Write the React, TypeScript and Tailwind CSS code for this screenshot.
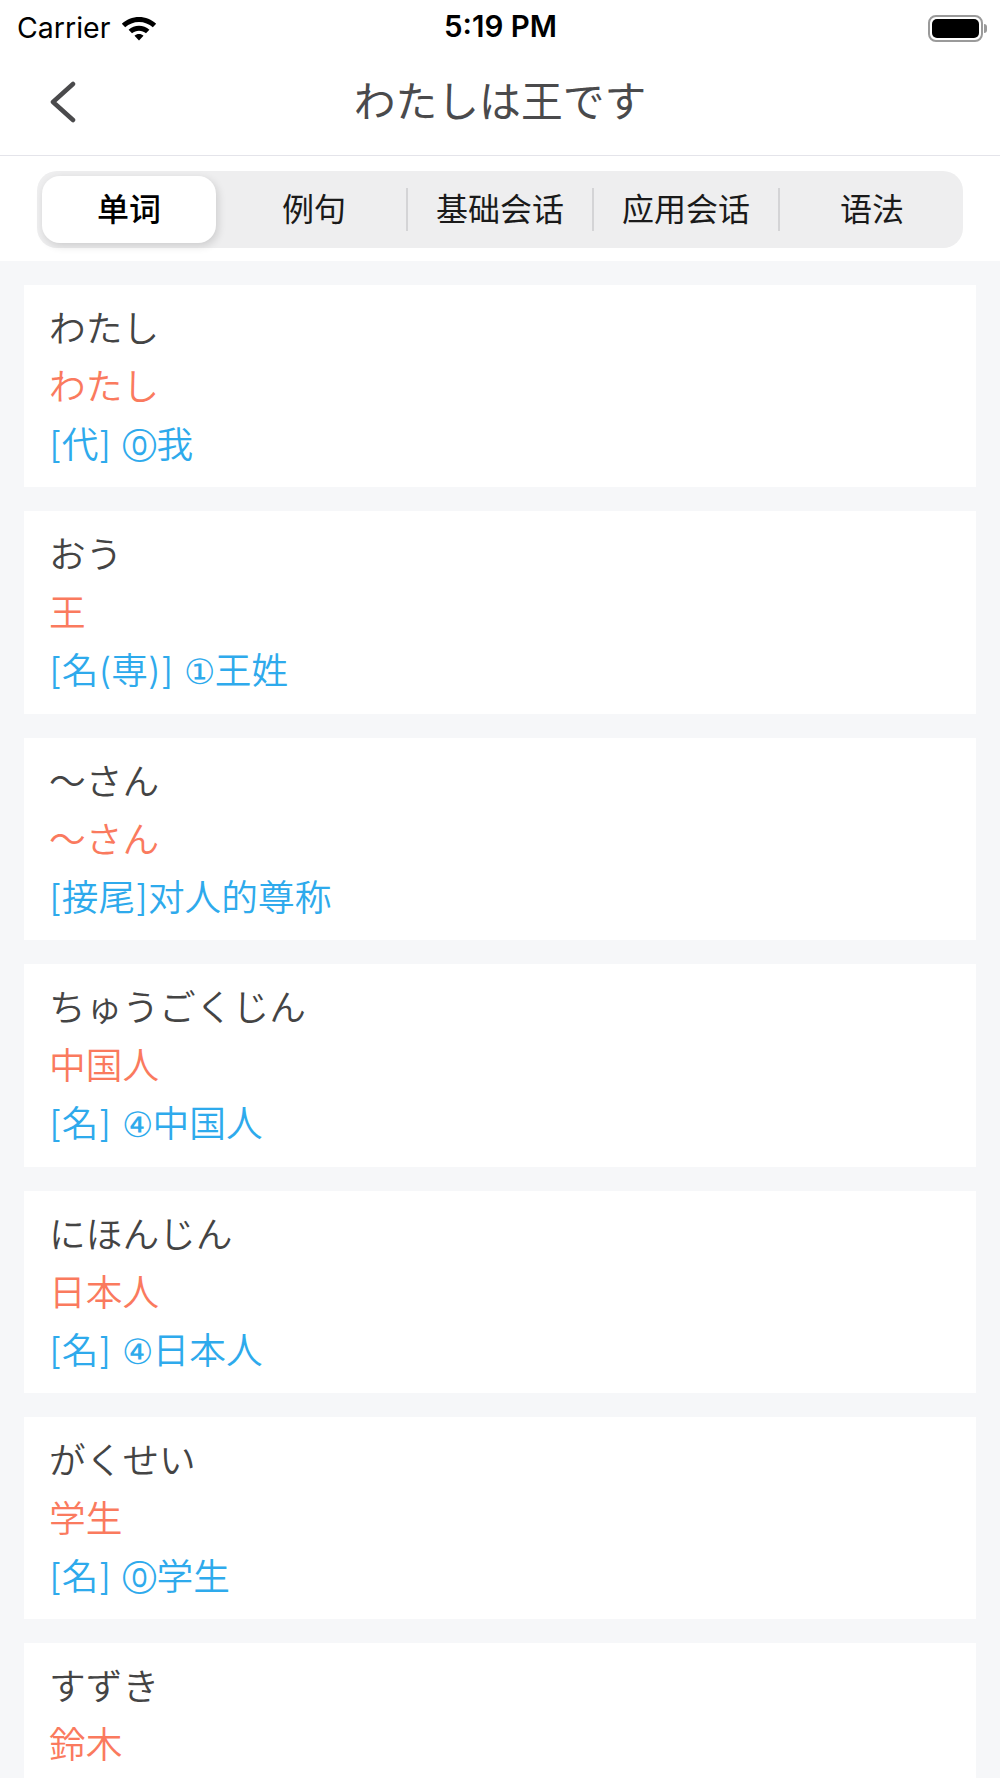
const cards = [
  ["わたし", "わたし", "[代] ", "⓪", "我"],
  ["おう", "王", "[名(専)] ", "①", "王姓"],
  ["～さん", "～さん", "[接尾]对人的尊称", "", ""],
  ["ちゅうごくじん", "中国人", "[名] ", "④", "中国人"],
  ["にほんじん", "日本人", "[名] ", "④", "日本人"],
  ["がくせい", "学生", "[名] ", "⓪", "学生"],
  ["すずき", "鈴木", "", "", ""],
];

export default function App() {
  return (
    <div className="w-[1000px] h-[1778px] overflow-hidden bg-[#f6f7f9] font-['Inter','Noto_Sans_CJK_SC',sans-serif]">
      <div className="bg-white h-[261px] flex flex-col">
        <div className="h-[57px] px-[17px] flex items-center justify-between relative text-black">
          <div className="flex items-center gap-[11px]">
            <span className="text-[28.5px] leading-none">Carrier</span>
            <svg width="36" height="27" viewBox="0 0 36 27" fill="#000">
              <path d="M18 2C11.5 2 5.4 4.5.8 8.8L4.2 12.3C8 8.9 12.8 6.9 18 6.9s10 2 13.8 5.4l3.4-3.5C30.6 4.5 24.5 2 18 2z" />
              <path d="M18 10.8c-3.9 0-7.5 1.5-10.4 4l3.4 3.5c2-1.6 4.4-2.6 7-2.6s5 1 7 2.6l3.4-3.5c-2.9-2.5-6.5-4-10.4-4z" />
              <path d="M18 19c-1.7 0-3.3.6-4.5 1.7L18 25.6l4.5-4.9c-1.2-1.1-2.8-1.7-4.5-1.7z" />
            </svg>
          </div>
          <span className="absolute left-[444px] top-[10px] text-[29.5px] leading-[33px] font-semibold">5:19 PM</span>
          <div className="flex items-center mr-[-4px]">
            <div className="w-[55px] h-[27px] rounded-[8px] border-[2px] border-[#9a9a9a] p-[2px]">
              <div className="w-full h-full rounded-[5px] bg-black" />
            </div>
            <div className="w-[3px] h-[9px] ml-[1px] rounded-r-full bg-[#9a9a9a]" />
          </div>
        </div>
        <div className="h-[99px] border-b border-[#e4e4ea] relative flex items-center justify-center">
          <svg className="absolute left-[48px] top-[22px]" width="30" height="44" viewBox="0 0 30 44" fill="none" stroke="#4a4a4c" strokeWidth="4.5" strokeLinecap="round" strokeLinejoin="round">
            <path d="M25 5 5 23l20 18" />
          </svg>
          <span className="text-[41.8px] leading-none text-[#4a4a4c] font-['Noto_Sans_CJK_JP',sans-serif] mt-[-13px]">わたしは王です</span>
        </div>
        <div className="mx-[37px] mt-[15px] h-[77px] rounded-[20px] bg-[#eeeeef] p-[5px] flex items-stretch">
          <div className="w-[179px] shrink-0 pr-[5px]">
            <div className="h-full rounded-[18px] bg-white shadow-[2px_3px_8px_rgba(0,0,0,0.14)] flex items-center justify-center text-[32px] text-black font-medium">单词</div>
          </div>
          <div className="w-[186px] shrink-0 flex items-center justify-center text-[32px] text-[#1a1a1a]">例句</div>
          <div className="w-[186px] shrink-0 relative flex items-center justify-center text-[32px] text-[#1a1a1a]">
            <div className="absolute left-[-1px] top-[12px] h-[43px] w-[2px] bg-[#d4d4d6]" />基础会话
          </div>
          <div className="w-[186px] shrink-0 relative flex items-center justify-center text-[32px] text-[#1a1a1a]">
            <div className="absolute left-[-1px] top-[12px] h-[43px] w-[2px] bg-[#d4d4d6]" />应用会话
          </div>
          <div className="w-[186px] shrink-0 relative flex items-center justify-center text-[32px] text-[#1a1a1a]">
            <div className="absolute left-[-1px] top-[12px] h-[43px] w-[2px] bg-[#d4d4d6]" />语法
          </div>
        </div>
      </div>
      <div className="pt-[24px] px-[24px] flex flex-col gap-[24px] text-[36.7px] leading-[58px] font-['Inter','Noto_Sans_CJK_JP',sans-serif] font-[350]">
        {cards.map((c) => (
          <div key={c[0]} className="bg-white h-[202.4px] shrink-0 px-[25px] pt-[15px]">
            <div className="text-[#444444]">{c[0]}</div>
            <div className="text-[#fa7a5e]">{c[1]}</div>
            {c[2] && (
              <div className="text-[#2eaaec]">
                {c[2]}
                {c[3] && <span className="text-[35px] font-['DejaVu_Sans',sans-serif]">{c[3]}</span>}
                {c[4]}
              </div>
            )}
          </div>
        ))}
      </div>
    </div>
  );
}
